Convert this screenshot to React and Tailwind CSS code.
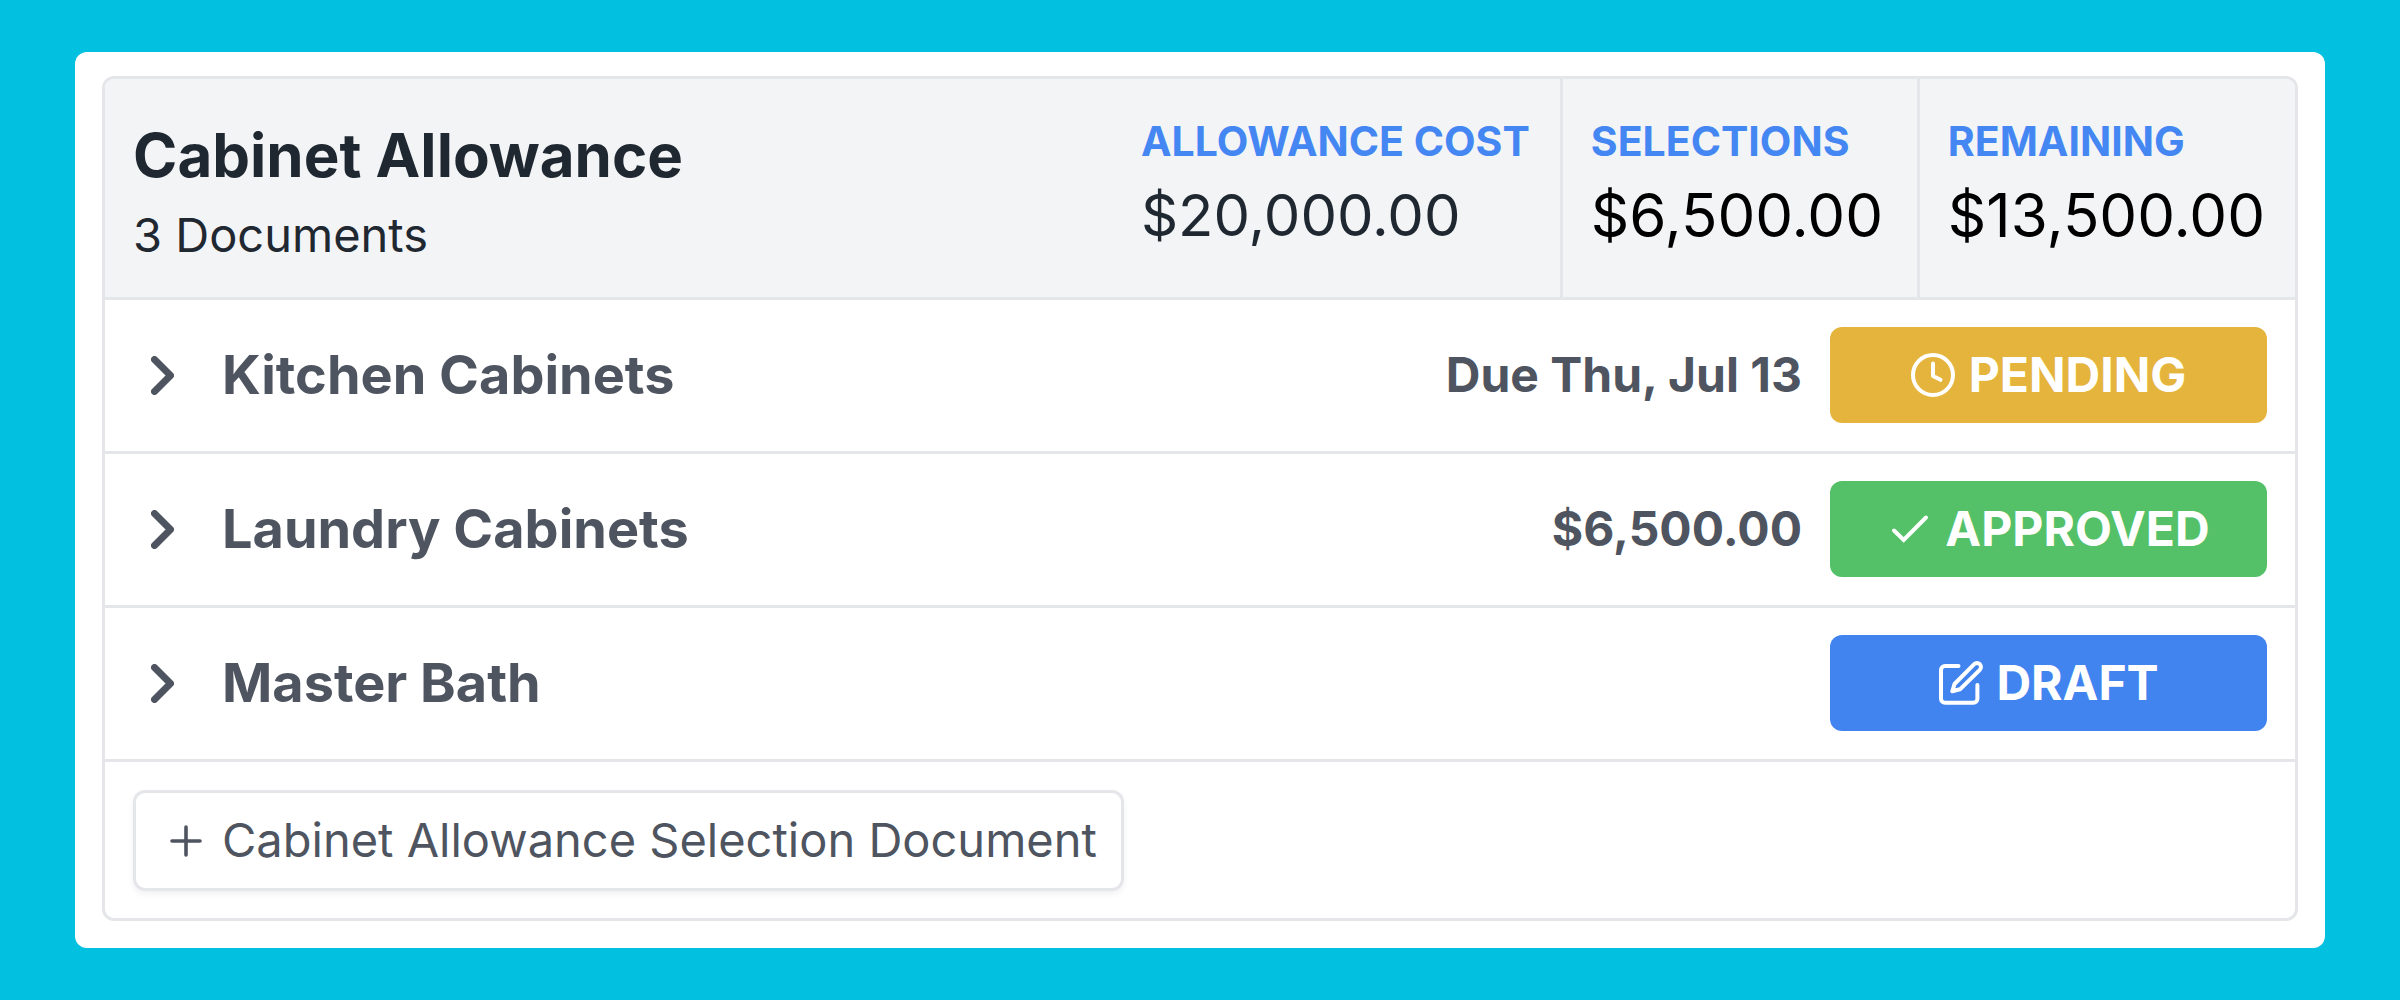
const rows = [
  { name: "Kitchen Cabinets", detail: "Due Thu, Jul 13", status: "PENDING", Icon: ClockIcon, color: "bg-[#e5b43c]" },
  { name: "Laundry Cabinets", detail: "$6,500.00", status: "APPROVED", Icon: CheckIcon, color: "bg-[#54c168]" },
  { name: "Master Bath", detail: "", status: "DRAFT", Icon: EditIcon, color: "bg-[#4284ef]" },
];

const totals = [
  { label: "ALLOWANCE COST", value: "$20,000.00", tone: "text-[58px] text-[#1f2731]" },
  { label: "SELECTIONS", value: "$6,500.00", tone: "text-[60px] text-black" },
  { label: "REMAINING", value: "$13,500.00", tone: "text-[60px] text-black" },
];

function ClockIcon() {
  return (
    <svg className="size-11 shrink-0" viewBox="0 0 44 44" fill="none" stroke="currentColor" strokeWidth="4" strokeLinecap="round" strokeLinejoin="round" aria-hidden="true">
      <circle cx="22" cy="22" r="20" />
      <path d="M22 10.5V23l7.5 3.8" />
    </svg>
  );
}

function CheckIcon() {
  return (
    <svg className="size-11 shrink-0" viewBox="0 0 44 44" fill="none" stroke="currentColor" strokeWidth="4" strokeLinecap="round" aria-hidden="true">
      <path d="M7 23.5l9.7 9.5L39 10.5" />
    </svg>
  );
}

function EditIcon() {
  return (
    <svg className="size-11 shrink-0 overflow-visible" viewBox="0 0 44 44" fill="none" stroke="currentColor" strokeWidth="4" strokeLinecap="round" strokeLinejoin="round" aria-hidden="true">
      <path d="M20.5 5H7a4 4 0 0 0-4 4v28.7a4 4 0 0 0 4 4h28.4a4 4 0 0 0 4-4V24" />
      <path d="M14.3 30.3l2.2-7.3L36.2 3.2a3.9 3.9 0 0 1 5.6 5.6L22 28.3z" />
    </svg>
  );
}

function ChevronIcon() {
  return (
    <svg className="h-[39px] w-[23px]" viewBox="0 0 23 39" fill="none" stroke="currentColor" strokeWidth="7" strokeLinecap="round" strokeLinejoin="round" aria-hidden="true">
      <path d="M3.5 3.5l16 16-16 16" />
    </svg>
  );
}

export default function App() {
  return (
    <main className="min-h-screen bg-[#02c0df] px-[75px] py-[52px] font-['Inter',sans-serif]">
      <div className="rounded-xl bg-white px-[27px] pt-6 pb-[27px]">
        <section className="overflow-hidden rounded-xl border-[3px] border-[#e5e6e9]">
          <header className="flex border-b-[3px] border-[#e5e6e9] bg-[#f3f4f6] text-[#1f2731]">
            <div className="flex-1 pt-10 pl-7">
              <h1 className="text-[60px] leading-[72px] font-bold">Cabinet Allowance</h1>
              <p className="mt-3 text-[47px] leading-[64px]">3 Documents</p>
            </div>
            <dl className="flex divide-x-[3px] divide-[#e5e6e9]">
              {totals.map((t) => (
                <div key={t.label} className="min-w-[357px] pt-9 pr-[30px] pb-[34px] pl-7">
                  <dt className="text-[41px] leading-[52px] font-bold text-[#4487f3]">{t.label}</dt>
                  <dd className={`leading-[96px] ${t.tone}`}>{t.value}</dd>
                </div>
              ))}
            </dl>
          </header>
          <ul>
            {rows.map(({ name, detail, status, Icon, color }) => (
              <li key={name} className="flex items-center border-b-[3px] border-[#e5e6e9] px-7 pt-[27px] pb-7 text-[#4f5560]">
                <button type="button" className="flex items-center gap-12 pl-[18px] text-[54px] leading-[72px] font-bold">
                  <ChevronIcon />
                  {name}
                </button>
                <span className="ml-auto text-[48px] font-bold">{detail}</span>
                <button type="button" className={`ml-7 flex h-24 w-[437px] items-center justify-center gap-3.5 rounded-xl text-[48px] font-bold text-white ${color}`}>
                  <Icon />
                  {status}
                </button>
              </li>
            ))}
          </ul>
          <div className="px-7 pt-7 pb-[27px]">
            <button type="button" className="flex h-[101px] items-center gap-[18px] rounded-xl border-[3px] border-[#e5e6e9] pr-6 pl-8 text-[47px] text-[#4f5560] shadow-[0_3px_6px_rgba(0,0,0,0.06)]">
              <svg className="size-9" viewBox="0 0 36 36" fill="none" stroke="currentColor" strokeWidth="3.6" strokeLinecap="round" aria-hidden="true">
                <path d="M18 4v28M4 18h28" />
              </svg>
              Cabinet Allowance Selection Document
            </button>
          </div>
        </section>
      </div>
    </main>
  );
}
